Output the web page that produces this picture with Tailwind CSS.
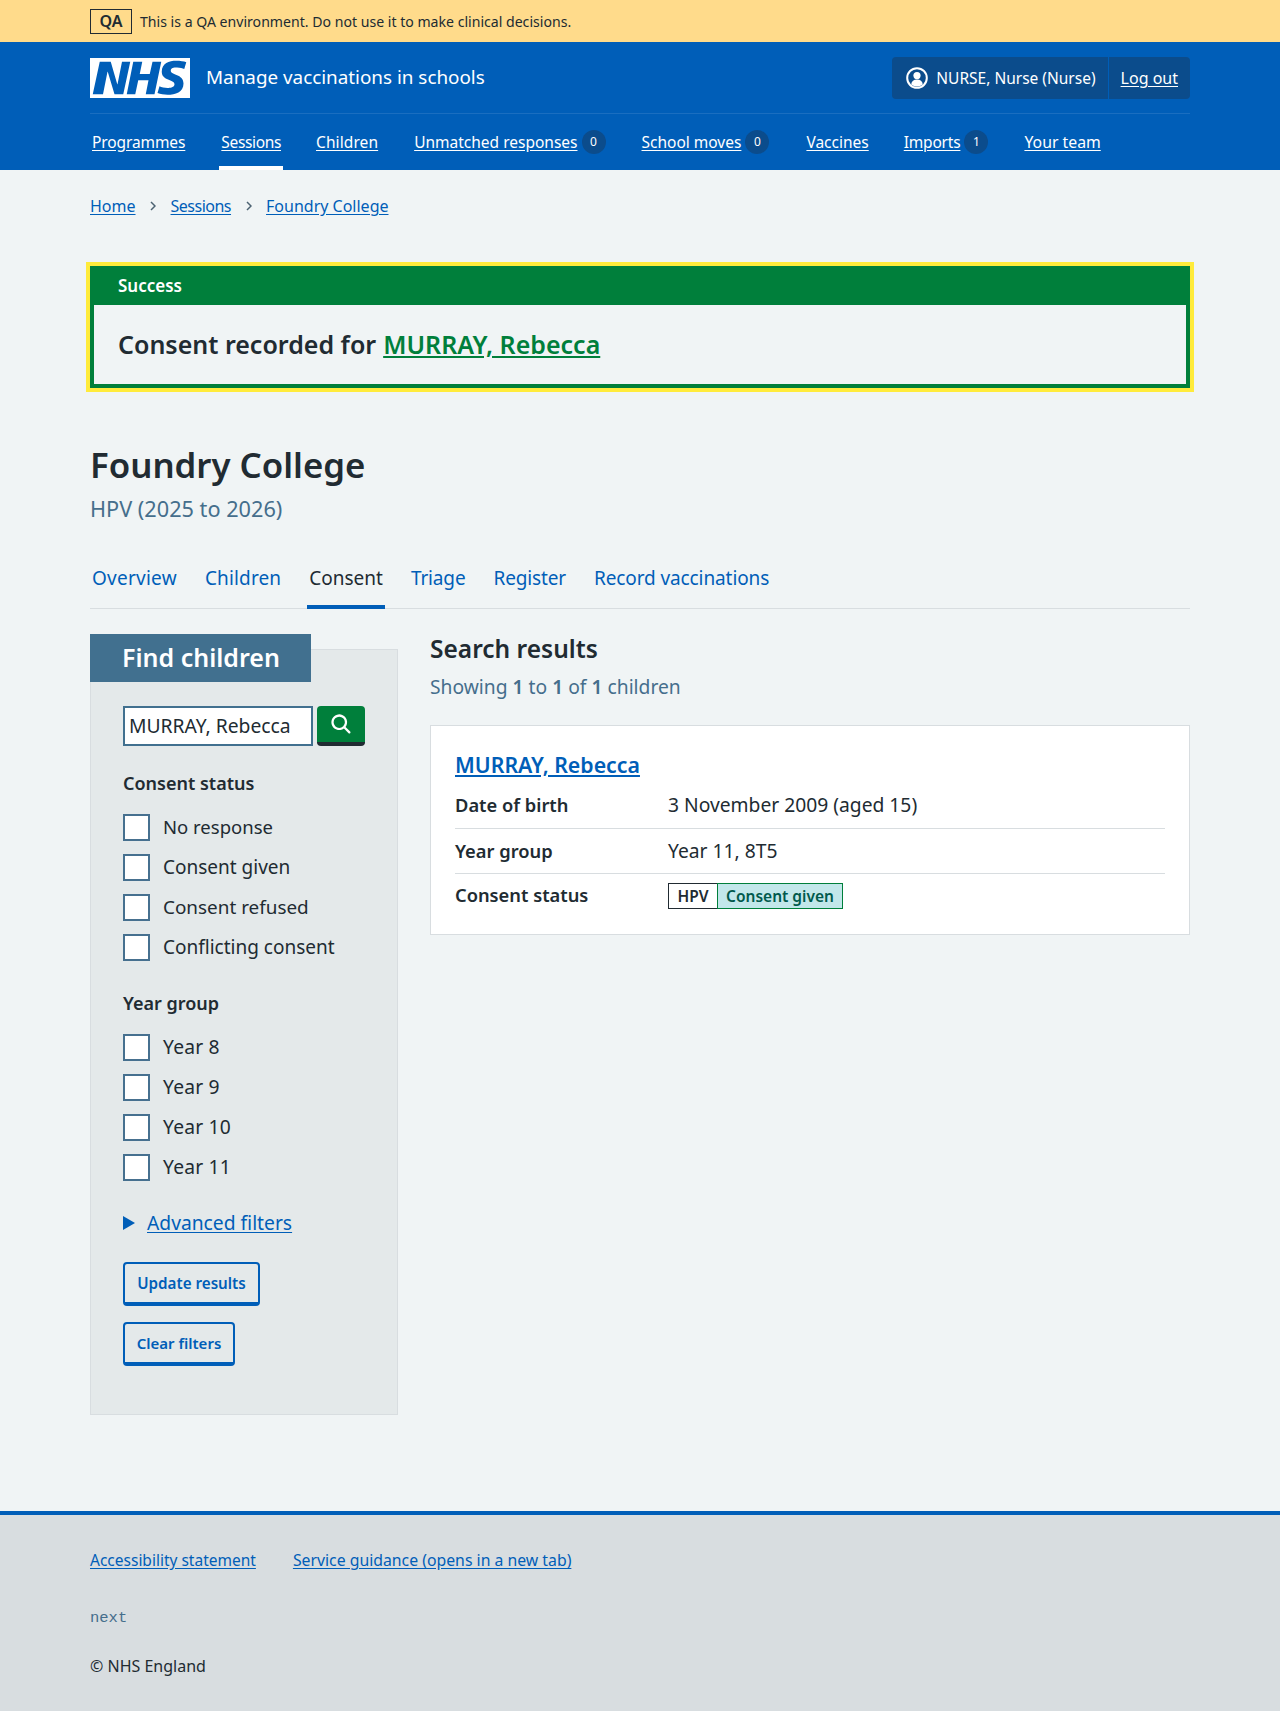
<!DOCTYPE html>
<html lang="en">
<head>
  <meta charset="UTF-8" />
  <title>Foundry College – Manage vaccinations in schools</title>
  <script src="https://cdn.jsdelivr.net/npm/@tailwindcss/browser@4"></script>
</head>
<body class="bg-[#f0f4f5] text-[#212b32] font-['Noto_Sans',sans-serif] text-[19.250px] leading-[28px]">

<!-- environment banner -->
<div class="bg-[#ffdb8b] h-[42px]">
  <div class="w-[1100px] mx-auto flex items-center gap-2 h-full">
    <span class="border border-[#212b32] h-[25px] w-[42px] flex items-center justify-center text-[16px] font-semibold">QA</span>
    <span class="text-[14.100px] pt-[2px]">This is a QA environment. Do not use it to make clinical decisions.</span>
  </div>
</div>

<!-- header -->
<header class="bg-[#005eb8] h-[128px] text-white">
  <div class="w-[1100px] mx-auto">
    <div class="flex items-center justify-between h-[72px] pt-[1px] border-b border-[#1a6ec0]">
      <div class="flex items-center gap-[16px]">
        <svg class="w-[100px] h-[40px]" viewBox="0 0 40 16" preserveAspectRatio="none">
          <path fill="#fff" d="M0 0h40v16H0z"></path>
          <path fill="#005eb8" d="M3.9 1.5h4.4l2.6 9h.1l1.8-9h3.3l-2.8 13H9.8l-2.7-9h-.1l-1.8 9H1.1M17.3 1.5h3.6l-1 4.9h4L25 1.5h3.5l-2.7 13h-3.5l1.1-5.6h-4.1l-1.2 5.6h-3.4M37.7 4.4c-.7-.3-1.6-.6-2.9-.6-1.4 0-2.5.2-2.5 1.3 0 1.8 5.1 1.2 5.1 5.1 0 3.6-3.3 4.5-6.4 4.5-1.3 0-2.9-.3-4-.7l.8-2.7c.7.4 2.1.7 3.2.7s2.8-.2 2.8-1.5c0-2.1-5.1-1.3-5.1-5 0-3.4 2.9-4.4 5.8-4.4 1.6 0 3.1.2 4 .6"></path>
        </svg>
        <span class="text-[18.850px] pb-[2px]">Manage vaccinations in schools</span>
      </div>
      <div class="flex items-center h-[42px] bg-[#0b4c8c] rounded-[4px] text-[15.500px]">
        <div class="flex items-center gap-2 pl-[14px] pr-3 h-full border-r border-[#005eb8]">
          <svg class="w-[22px] h-[22px]" viewBox="0 0 22 22">
            <circle cx="11" cy="11" r="9.8" fill="none" stroke="#fff" stroke-width="2"></circle>
            <circle cx="11" cy="8.6" r="3.6" fill="#fff"></circle>
            <path fill="#fff" d="M5.2 17.4c.3-3.2 2.600-5 5.800-5s5.500 1.800 5.800 5a9 9 0 0 1-11.600 0z"></path>
          </svg>
          <span>NURSE, Nurse (Nurse)</span>
        </div>
        <a href="#" class="px-3 text-[16px] underline underline-offset-2">Log out</a>
      </div>
    </div>
    <nav class="flex text-[15.500px] h-[56px]">
      <a href="#" class="ml-[2px] mr-[34px] pt-[14px] tracking-[-0.100px] underline underline-offset-2">Programmes</a>
      <a href="#" class="mr-[33px] px-[2px] pt-[14px] tracking-[-0.350px] underline underline-offset-2 border-b-4 border-white h-[56px]">Sessions</a>
      <a href="#" class="mr-[36px] pt-[14px] tracking-[0.100px] underline underline-offset-2">Children</a>
      <div class="mr-[36px] pt-[14px] flex items-start gap-1"><a href="#" class="underline underline-offset-2">Unmatched responses</a><span class="w-6 h-6 mt-[2px] rounded-full bg-[#0b4c8c] text-[12px] leading-6 text-center">0</span></div>
      <div class="mr-[37px] pt-[14px] flex items-start gap-1"><a href="#" class="underline underline-offset-2">School moves</a><span class="w-6 h-6 mt-[2px] rounded-full bg-[#0b4c8c] text-[12px] leading-6 text-center">0</span></div>
      <a href="#" class="mr-[35px] pt-[14px] underline underline-offset-2">Vaccines</a>
      <div class="mr-[36px] pt-[14px] flex items-start gap-1"><a href="#" class="tracking-[-0.200px] underline underline-offset-2">Imports</a><span class="w-6 h-6 mt-[2px] rounded-full bg-[#0b4c8c] text-[12px] leading-6 text-center">1</span></div>
      <a href="#" class="pt-[14px] text-[15.800px] underline underline-offset-2">Your team</a>
    </nav>
  </div>
</header>

<main class="w-[1100px] mx-auto">
  <!-- breadcrumb -->
  <div class="flex items-center h-[24px] mt-[24px] text-[16px] text-[#005eb8]">
    <a href="#" class="underline underline-offset-2">Home</a>
    <svg class="w-[6px] h-[10px] mx-[14.500px]" viewBox="0 0 6 10"><path d="M1 1l4 4-4 4" fill="none" stroke="#4c6272" stroke-width="1.500"></path></svg>
    <a href="#" class="tracking-[-0.500px] underline underline-offset-2">Sessions</a>
    <svg class="w-[6px] h-[10px] mx-[14.500px]" viewBox="0 0 6 10"><path d="M1 1l4 4-4 4" fill="none" stroke="#4c6272" stroke-width="1.500"></path></svg>
    <a href="#" class="underline underline-offset-2">Foundry College</a>
  </div>

  <!-- success alert -->
  <div class="mt-[44px] -mx-[4px] border-4 border-[#ffeb3b]">
    <div class="border-4 border-[#007f3b]">
      <div class="bg-[#007f3b] text-white font-semibold text-[17px] h-[35px] pl-[24px] leading-[32px]">Success</div>
      <p class="h-[79px] pl-[24px] pb-[2px] flex items-center gap-[7px] text-[25px] font-semibold">Consent recorded for <a href="#" class="text-[#007f3b] underline underline-offset-2">MURRAY, Rebecca</a></p>
    </div>
  </div>

  <h1 class="mt-[49px] text-[34.800px] leading-[48px] font-semibold">Foundry College</h1>
  <p class="mt-[4px] text-[21.700px] leading-[32px] text-[#456e8c]">HPV (2025 to 2026)</p>

  <!-- tabs -->
  <div class="mt-[25px] flex h-[59px] border-b border-[#d8dde0] text-[#005eb8] text-[19px]">
    <a href="#" class="px-[2px] mr-[24px] pt-[14px] tracking-[0.250px]">Overview</a>
    <a href="#" class="px-[2px] mr-[24px] pt-[14px] tracking-[0.150px]">Children</a>
    <a href="#" class="px-[2px] mr-[24px] pt-[14px] text-[#212b32] border-b-4 border-[#005eb8] h-[59px]">Consent</a>
    <a href="#" class="px-[2px] mr-[24px] pt-[14px] tracking-[-0.150px]">Triage</a>
    <a href="#" class="px-[2px] mr-[24px] pt-[14px] tracking-[-0.150px]">Register</a>
    <a href="#" class="px-[2px] pt-[14px] tracking-[-0.100px]">Record vaccinations</a>
  </div>

  <div class="flex gap-[32px] mt-[25px]">
    <!-- filters -->
    <aside class="w-[308px] shrink-0 pt-[15px]">
      <div class="relative h-[766px] bg-[#e4e9ea] border border-[#d8dde0] pl-[32px]">
        <h2 class="absolute -top-[16px] -left-px w-[221px] h-[48px] bg-[#41708f] text-white text-[25px] font-semibold pl-[32px] leading-[46px]">Find children</h2>
        <div class="flex gap-[4px] mt-[56px]">
          <div class="w-[190px] h-[40px] bg-white border-2 border-[#41708f] pl-[4px] leading-[36px] text-[19.300px]">MURRAY, Rebecca</div>
          <button class="w-[48px] h-[40px] bg-[#007f3b] rounded-[4px] border-b-4 border-[#212b32] flex items-center justify-center">
            <svg class="w-[27px] h-[27px]" viewBox="0 0 24 24"><path fill="#fff" d="M19.710 18.290l-4.110-4.100a7 7 0 1 0-1.410 1.410l4.100 4.110a1 1 0 0 0 1.420 0 1 1 0 0 0 0-1.420zM5 10a5 5 0 1 1 5 5 5 5 0 0 1-5-5z"></path></svg>
          </button>
        </div>

        <h3 class="mt-[23px] text-[18px] font-semibold">Consent status</h3>
        <div class="mt-[16px] flex flex-col gap-[12px]">
          <label class="flex items-center gap-[13px] text-[18.500px]"><span class="w-[27px] h-[27px] bg-white border-2 border-[#46708f]"></span>No response</label>
          <label class="flex items-center gap-[13px] text-[19px]"><span class="w-[27px] h-[27px] bg-white border-2 border-[#46708f]"></span>Consent given</label>
          <label class="flex items-center gap-[13px] text-[18.900px]"><span class="w-[27px] h-[27px] bg-white border-2 border-[#46708f]"></span>Consent refused</label>
          <label class="flex items-center gap-[13px] text-[19px]"><span class="w-[27px] h-[27px] bg-white border-2 border-[#46708f]"></span>Conflicting consent</label>
        </div>

        <h3 class="mt-[28px] text-[18px] font-semibold">Year group</h3>
        <div class="mt-[16px] flex flex-col gap-[12px] tracking-[0.200px]">
          <label class="flex items-center gap-[13px]"><span class="w-[27px] h-[27px] bg-white border-2 border-[#46708f]"></span>Year 8</label>
          <label class="flex items-center gap-[13px]"><span class="w-[27px] h-[27px] bg-white border-2 border-[#46708f]"></span>Year 9</label>
          <label class="flex items-center gap-[13px]"><span class="w-[27px] h-[27px] bg-white border-2 border-[#46708f]"></span>Year 10</label>
          <label class="flex items-center gap-[13px]"><span class="w-[27px] h-[27px] bg-white border-2 border-[#46708f]"></span>Year 11</label>
        </div>

        <div class="mt-[28px] flex items-center gap-[12px] text-[#005eb8]">
          <svg class="w-[12px] h-[14px]" viewBox="0 0 12 14"><path fill="#005eb8" d="M0 0l12 7-12 7z"></path></svg>
          <a href="#" class="underline underline-offset-2">Advanced filters</a>
        </div>

        <button class="block mt-[25px] h-[44px] w-[137px] border-2 border-b-4 border-[#005eb8] rounded-[4px] text-[#005eb8] text-[15.200px] font-semibold">Update results</button>
        <button class="block mt-[16px] h-[44px] w-[112px] border-2 border-b-4 border-[#005eb8] rounded-[4px] text-[#005eb8] text-[15px] font-semibold">Clear filters</button>
      </div>
    </aside>

    <!-- results -->
    <section class="flex-1">
      <h2 class="text-[24.500px] leading-[30px] font-semibold">Search results</h2>
      <p class="mt-[9px] text-[#456e8c]">Showing <b class="font-semibold">1</b> to <b class="font-semibold">1</b> of <b class="font-semibold">1</b> children</p>
      <div class="mt-[24px] h-[210px] bg-white border border-[#d8dde0] px-[24px] pt-[24px]">
        <a href="#" class="block text-[21.300px] leading-[30px] font-semibold text-[#005eb8] underline underline-offset-2">MURRAY, Rebecca</a>
        <div class="flex items-center h-[48px] mt-[1px] border-b border-[#d8dde0]"><span class="w-[213px] font-semibold text-[18.300px]">Date of birth</span><span>3 November 2009 (aged 15)</span></div>
        <div class="flex items-center h-[45px] border-b border-[#d8dde0]"><span class="w-[213px] font-semibold text-[18.300px]">Year group</span><span>Year 11, 8T5</span></div>
        <div class="flex items-center h-[44px]"><span class="w-[213px] pb-[2px] font-semibold text-[18.300px]">Consent status</span>
          <span class="flex h-[26px] text-[15.500px] leading-[24px] font-semibold">
            <span class="w-[49px] text-center bg-white border border-[#212b32] border-r-0">HPV</span>
            <span class="w-[126px] text-center bg-[#c2e7ea] text-[#00594c] border border-[#007f3b]">Consent given</span>
          </span>
        </div>
      </div>
    </section>
  </div>
</main>

<!-- footer -->
<footer class="mt-[96px] h-[200px] bg-[#d8dde0] border-t-4 border-[#005eb8]">
  <div class="w-[1100px] mx-auto pt-[33px] text-[16px] leading-[24px]">
    <div class="flex gap-[37px] text-[#005eb8]">
      <a href="#" class="text-[15.500px] underline underline-offset-2">Accessibility statement</a>
      <a href="#" class="text-[15.800px] underline underline-offset-2">Service guidance (opens in a new tab)</a>
    </div>
    <p class="mt-[34px] font-['Liberation_Mono',monospace] text-[15.500px] text-[#456e8c]">next</p>
    <p class="mt-[24px]">© NHS England</p>
  </div>
</footer>

</body>
</html>
